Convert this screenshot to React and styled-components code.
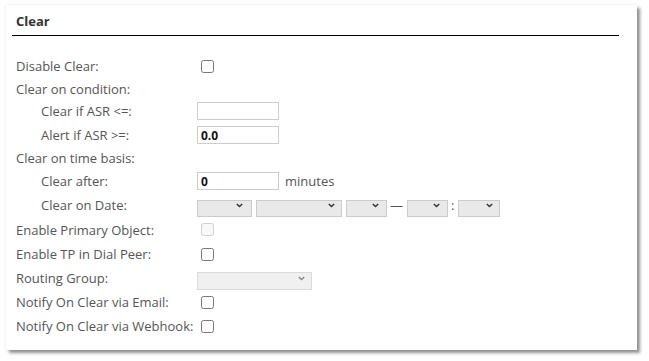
import React from 'react';
import styled, { createGlobalStyle } from 'styled-components';

const Global = createGlobalStyle`
  html, body { margin: 0; padding: 0; background: #fff; }
  body { font-family: "Open Sans", "DejaVu Sans", sans-serif; }
`;

const Page = styled.div`
  padding: 5px 0 0 6px;
  width: 649px;
  height: 361px;
  box-sizing: border-box;
`;

const Card = styled.section`
  width: 631px;
  height: 345px;
  box-sizing: border-box;
  background: #fff;
  box-shadow: 3px 3px 3px rgba(0, 0, 0, 0.42), 0 0 3px rgba(0, 0, 0, 0.1);
  padding: 0 18px 0 6px;
`;

const Title = styled.h3`
  margin: 0;
  padding: 7px 4px 5px;
  font-size: 13px;
  font-weight: 700;
  color: #333;
  line-height: 18px;
  border-bottom: 1px solid #000;
`;

const Form = styled.div`
  display: flex;
  flex-direction: column;
  padding: 18px 0 0 4px;
`;

const Row = styled.div`
  display: grid;
  grid-template-columns: 181px auto;
  align-items: center;
  height: ${p => p.$h || 24}px;
`;

const Label = styled.label`
  font-size: 13px;
  color: #555;
  padding-left: ${p => (p.$indent ? 25 : 0)}px;
  white-space: nowrap;
`;

const Controls = styled.div`
  display: flex;
  align-items: center;
`;

const Check = styled.input.attrs({ type: 'checkbox' })`
  width: 13px;
  height: 13px;
  margin: 0 0 0 4px;
`;

const TextInput = styled.input.attrs({ type: 'text' })`
  width: 82px;
  height: 18px;
  box-sizing: border-box;
  border: 1px solid #ccc;
  padding: 0 3px;
  font-family: "Open Sans", sans-serif;
  font-size: 12px;
  font-weight: 700;
  color: #111;
  outline: none;
`;

const Unit = styled.span`
  font-size: 13px;
  color: #555;
  margin-left: 6px;
`;

const SelectWrap = styled.div`
  position: relative;
  width: ${p => p.$w}px;
  height: ${p => p.$hh || 17}px;
  margin-right: ${p => p.$mr ?? 4}px;
`;

const Select = styled.select`
  appearance: none;
  width: 100%;
  height: 100%;
  box-sizing: border-box;
  border: 1px solid #ccc;
  background: ${p => (p.disabled ? '#ebebeb' : '#e9e9e9')};
  margin: 0;
  padding: 0;
  font-family: "Open Sans", sans-serif;
  font-size: 12px;
`;

const Chevron = styled.svg`
  position: absolute;
  right: ${p => p.$r || 10}px;
  top: 50%;
  margin-top: -2px;
  pointer-events: none;
`;

const Sep = styled.span`
  font-size: 13px;
  color: #555;
  margin: 0 4px 0 ${p => p.$l || 0}px;
`;

const Dropdown = ({ w, mr, disabled, h, r }) => (
  <SelectWrap $w={w} $mr={mr} $hh={h}>
    <Select disabled={disabled}><option></option></Select>
    <Chevron $r={r} width="7" height="5" viewBox="0 0 7 5">
      <path d="M0.8 0.9 L3.5 3.6 L6.2 0.9" fill="none" stroke={disabled ? '#888' : '#333'} strokeWidth="1.4" />
    </Chevron>
  </SelectWrap>
);

export default function App() {
  return (
    <Page>
      <Global />
      <Card>
        <Title>Clear</Title>
        <Form>
          <Row>
            <Label>Disable Clear:</Label>
            <Controls><Check /></Controls>
          </Row>
          <Row $h={21}>
            <Label>Clear on condition:</Label>
          </Row>
          <Row>
            <Label $indent>Clear if ASR &lt;=:</Label>
            <Controls><TextInput defaultValue="" /></Controls>
          </Row>
          <Row>
            <Label $indent>Alert if ASR &gt;=:</Label>
            <Controls><TextInput defaultValue="0.0" /></Controls>
          </Row>
          <Row $h={22}>
            <Label>Clear on time basis:</Label>
          </Row>
          <Row>
            <Label $indent>Clear after:</Label>
            <Controls><TextInput defaultValue="0" /><Unit>minutes</Unit></Controls>
          </Row>
          <Row>
            <Label $indent>Clear on Date:</Label>
            <Controls>
              <Dropdown w={55} r={9} />
              <Dropdown w={86} r={7} />
              <Dropdown w={41} mr={3} r={8} />
              <Sep>—</Sep>
              <Dropdown w={41} mr={2} r={8} />
              <Sep $l={1}>:</Sep>
              <Dropdown w={42} r={7} />
            </Controls>
          </Row>
          <Row $h={25}>
            <Label>Enable Primary Object:</Label>
            <Controls><Check disabled /></Controls>
          </Row>
          <Row>
            <Label>Enable TP in Dial Peer:</Label>
            <Controls><Check /></Controls>
          </Row>
          <Row>
            <Label>Routing Group:</Label>
            <Controls><Dropdown w={115} h={18} disabled r={7} /></Controls>
          </Row>
          <Row>
            <Label>Notify On Clear via Email:</Label>
            <Controls><Check /></Controls>
          </Row>
          <Row>
            <Label>Notify On Clear via Webhook:</Label>
            <Controls><Check /></Controls>
          </Row>
        </Form>
      </Card>
    </Page>
  );
}
